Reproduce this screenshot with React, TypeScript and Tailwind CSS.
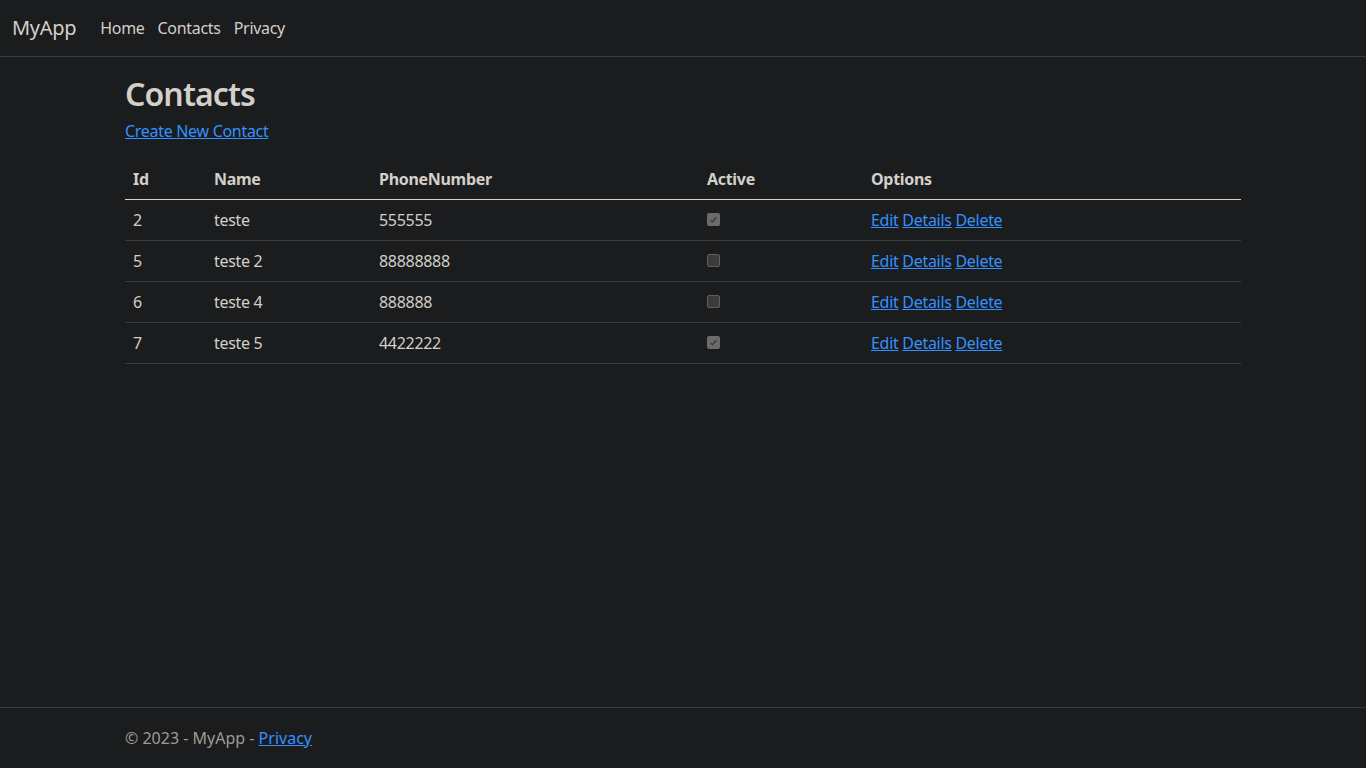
import React from 'react';

const contacts = [
  { id: 2, name: 'teste', phone: '555555', active: true },
  { id: 5, name: 'teste 2', phone: '88888888', active: false },
  { id: 6, name: 'teste 4', phone: '888888', active: false },
  { id: 7, name: 'teste 5', phone: '4422222', active: true },
];

const Check = ({ checked }: { checked: boolean }) =>
  checked ? (
    <span className="flex w-[13px] h-[13px] rounded-[2px] bg-[#6b6b6b] items-center justify-center">
      <svg viewBox="0 0 12 12" className="w-[9px] h-[9px]">
        <path d="M2 6.5 L4.6 9 L10 3" fill="none" stroke="#3a3a3a" strokeWidth="1.8" />
      </svg>
    </span>
  ) : (
    <span className="block w-[13px] h-[13px] rounded-[2px] bg-[#3b3b3b] border border-[#5e5e5e]" />
  );

const App = () => {
  return (
    <div
      className="min-h-screen flex flex-col bg-[#1b1c1e] text-[#d3cfc9] text-base tracking-[-0.3px]"
      style={{ fontFamily: '"Segoe UI", "Noto Sans", sans-serif' }}
    >
      <nav className="h-[57px] border-b border-[#3a3b3d] flex items-center px-3">
        <a className="text-[20px] mr-[24px] text-[#d3cfc9]">MyApp</a>
        <div className="flex gap-[13px] text-[#d3cfc9]">
          <a>Home</a>
          <a>Contacts</a>
          <a>Privacy</a>
        </div>
      </nav>

      <main className="flex-1 w-[1116px] mx-auto pt-[18px]">
        <h1 className="text-[32px] leading-[38px] font-semibold tracking-[-0.9px] mb-[6px]">Contacts</h1>
        <p className="leading-6 mb-4">
          <a className="text-[#3391ff] underline">Create New Contact</a>
        </p>
        <table className="w-full border-collapse">
          <thead>
            <tr className="border-b border-[#d3cfc9] text-left">
              <th className="w-[81px] px-2 py-2 leading-6 font-bold">Id</th>
              <th className="w-[165px] px-2 py-2 leading-6 font-bold">Name</th>
              <th className="w-[328px] px-2 py-2 leading-6 font-bold">PhoneNumber</th>
              <th className="w-[164px] px-2 py-2 leading-6 font-bold">Active</th>
              <th className="px-2 py-2 leading-6 font-bold">Options</th>
            </tr>
          </thead>
          <tbody>
            {contacts.map((c) => (
              <tr key={c.id} className="border-b border-[#3a3b3d]">
                <td className="px-2 py-2 leading-6">{c.id}</td>
                <td className="px-2 py-2 leading-6">{c.name}</td>
                <td className="px-2 py-2 leading-6">{c.phone}</td>
                <td className="px-2 py-2 leading-6">
                  <div className="h-6 pt-[5px]">
                    <Check checked={c.active} />
                  </div>
                </td>
                <td className="px-2 py-2 leading-6 text-[#3391ff]">
                  <a className="underline">Edit</a> <a className="underline">Details</a>{' '}
                  <a className="underline">Delete</a>
                </td>
              </tr>
            ))}
          </tbody>
        </table>
      </main>

      <footer className="border-t border-[#3a3b3d] h-[61px]">
        <div className="w-[1116px] mx-auto leading-[60px] tracking-normal text-[#a19b92]">
          © 2023 - MyApp - <a className="text-[#3391ff] underline">Privacy</a>
        </div>
      </footer>
    </div>
  );
};

export default App;
